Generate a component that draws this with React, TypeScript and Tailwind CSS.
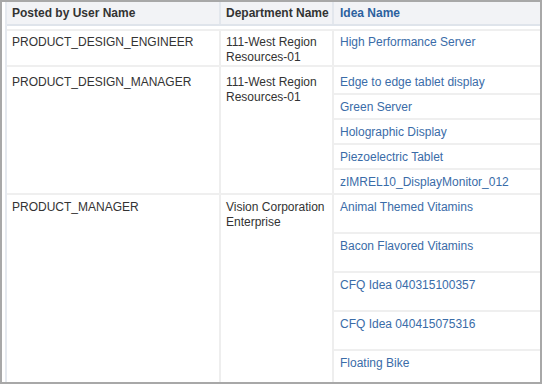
type IdeaRow = {
  user: string;
  dept: string[];
  pt: string;
  ideas: string[];
  first: string;
  rest: string;
  last: string;
};

// heights are border-box, so rows with a bottom rule include its 2px
const rows: IdeaRow[] = [
  {
    user: "PRODUCT_DESIGN_ENGINEER",
    dept: ["111-West Region", "Resources-01"],
    pt: "pt-[4px]",
    ideas: ["High Performance Server"],
    first: "h-[34px] pt-[4px]",
    rest: "",
    last: "",
  },
  {
    user: "PRODUCT_DESIGN_MANAGER",
    dept: ["111-West Region", "Resources-01"],
    pt: "pt-[8px]",
    ideas: [
      "Edge to edge tablet display",
      "Green Server",
      "Holographic Display",
      "Piezoelectric Tablet",
      "zIMREL10_DisplayMonitor_012",
    ],
    first: "h-[28px] pt-[8px]",
    rest: "h-[25px] pt-[5px]",
    last: "h-[23px] pt-[5px]",
  },
  {
    user: "PRODUCT_MANAGER",
    dept: ["Vision Corporation", "Enterprise"],
    pt: "pt-[5px]",
    ideas: [
      "Animal Themed Vitamins",
      "Bacon Flavored Vitamins",
      "CFQ Idea 040315100357",
      "CFQ Idea 040415075316",
      "Floating Bike",
    ],
    first: "h-[39px] pt-[5px]",
    rest: "h-[39px] pt-[5px]",
    last: "h-[37px] pt-[5px]",
  },
];

export default function App() {
  return (
    <div
      className="w-[542px] h-[384px] overflow-hidden border-2 border-[#a8a8a8] bg-white text-[12px] leading-[15px] text-[#333]"
      style={{ fontFamily: '"Liberation Sans", Arial, sans-serif' }}
    >
      <div className="ml-[3px] h-full border-l-2 border-[#e5e9ef]">
        {/* header */}
        <div className="flex h-[24px] border-b-2 border-[#dfe4eb] bg-[#f2f3f6] font-bold">
          <div className="w-[212px] shrink-0 pl-[5px] pt-[4px]">Posted by User Name</div>
          <div className="w-[113px] shrink-0 border-l-2 border-[#e3e7ed] pl-[5px] pt-[4px]">
            Department Name
          </div>
          <div className="flex-1 border-l-2 border-[#e3e7ed] pl-[6px] pt-[4px] text-[#2c619e]">
            Idea Name
          </div>
        </div>
        <div className="h-[3px]" />

        {/* body */}
        <div className="border-t-2 border-[#efefef]">
          {rows.map((r) => (
            <div key={r.user} className="flex border-b-2 border-[#efefef]">
              <div className={`w-[212px] shrink-0 pl-[5px] ${r.pt}`}>{r.user}</div>
              <div className={`w-[113px] shrink-0 border-l-2 border-[#eeeeee] pl-[5px] ${r.pt}`}>
                {r.dept.map((d) => (
                  <div key={d} className="whitespace-nowrap">
                    {d}
                  </div>
                ))}
              </div>
              <div className="flex-1 border-l-2 border-[#eeeeee]">
                {r.ideas.map((idea, i) => {
                  const isLast = i === r.ideas.length - 1;
                  const size = i === 0 ? r.first : isLast ? r.last : r.rest;
                  return (
                    <div
                      key={idea}
                      className={`pl-[6px] text-[#3a6ca8] whitespace-nowrap ${size} ${
                        isLast ? "" : "border-b-2 border-[#efefef]"
                      }`}
                    >
                      {idea}
                    </div>
                  );
                })}
              </div>
            </div>
          ))}
        </div>
      </div>
    </div>
  );
}
